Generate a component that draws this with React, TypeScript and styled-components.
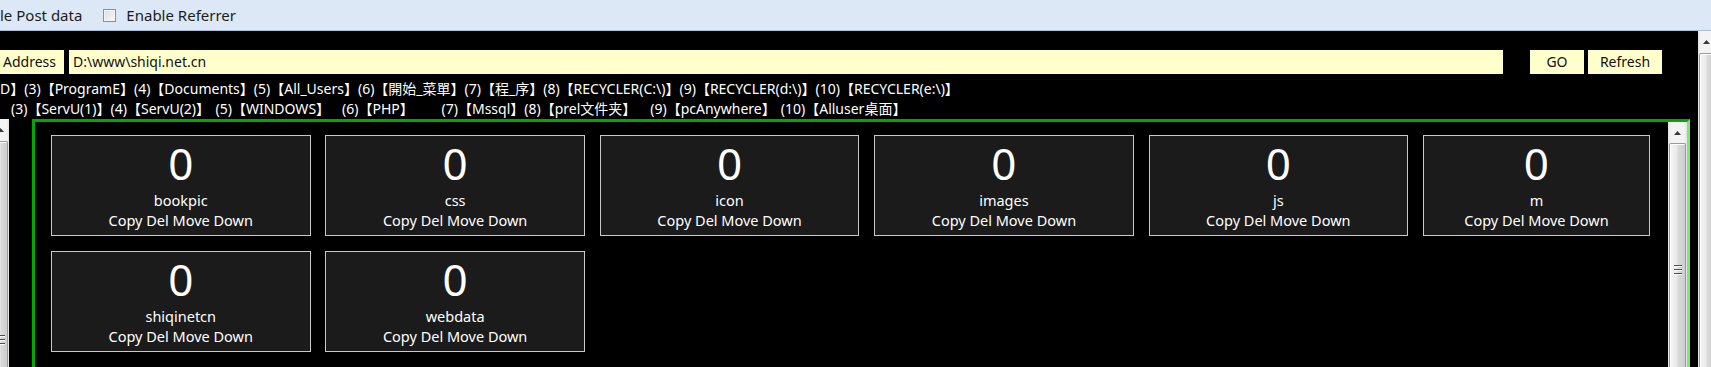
import React from "react";
import styled, { createGlobalStyle } from "styled-components";

const GlobalStyle = createGlobalStyle`
  html, body { margin: 0; padding: 0; background: #000; overflow: hidden; }
  body { font-family: "Noto Sans", "Noto Sans CJK SC", sans-serif; }
`;

const Page = styled.div`
  width: 1711px;
  height: 367px;
  display: flex;
  flex-direction: column;
  overflow: hidden;
  background: #000;
`;

const TopBar = styled.div`
  height: 30px;
  flex: none;
  background: #dce8f6;
  border-bottom: 1px solid #a9bfd8;
  display: flex;
  align-items: center;
  font-size: 15px;
  color: #1c1c1c;
  white-space: nowrap;
`;

const TopLabel = styled.span`
  line-height: 20px;
`;

const CheckBox = styled.span`
  width: 13px;
  height: 13px;
  box-sizing: border-box;
  margin: 0 10px 0 21px;
  border: 1px solid #8e8f8f;
  background: linear-gradient(135deg, #dcdcdc, #fbfbfb);
  box-shadow: inset 0 0 0 1px #f4f4f4;
  flex: none;
`;

const Body = styled.div`
  flex: 1;
  min-height: 0;
  display: flex;
`;

const Main = styled.div`
  flex: 1;
  min-width: 0;
  display: flex;
  flex-direction: column;
  padding-top: 19px;
`;

const AddressRow = styled.div`
  height: 24px;
  flex: none;
  display: flex;
  padding-right: 36px;
  font-size: 14px;
  color: #111;
`;

const YellowBox = styled.div<{ $w?: number; $center?: boolean }>`
  background: #ffffcc;
  height: 24px;
  line-height: 24px;
  box-sizing: border-box;
  white-space: nowrap;
  ${(p) => (p.$w ? `width: ${p.$w}px; flex: none;` : "flex: 1; min-width: 0;")}
  text-align: ${(p) => (p.$center ? "center" : "left")};
  padding-left: ${(p) => (p.$center ? 0 : 3)}px;
`;

const AddressLabel = styled(YellowBox)`
  margin-right: 5px;
`;

const AddressInput = styled(YellowBox)`
  margin-right: 27px;
  padding-left: 4px;
`;

const GoButton = styled(YellowBox)`
  margin-right: 4px;
`;

const Links = styled.div`
  margin-top: 5px;
  flex: none;
  font-size: 14px;
  color: #fff;
`;

const LinkRow = styled.div<{ $indent: number }>`
  display: flex;
  height: 20px;
  line-height: 20px;
  white-space: nowrap;
  padding-left: ${(p) => p.$indent}px;
`;

const LinkItem = styled.span<{ $w?: number }>`
  flex: none;
  ${(p) => (p.$w ? `min-width: ${p.$w}px;` : "")}
`;

const Bottom = styled.div`
  flex: 1;
  min-height: 0;
  display: flex;
  align-items: stretch;
  overflow: hidden;
`;

const Panel = styled.div`
  margin-left: 23px;
  width: 1658px;
  height: 270px;
  flex: none;
  box-sizing: border-box;
  border-style: solid;
  border-width: 3px;
  border-color: #00a800 #7fe37f #7fe37f #00a800;
  display: flex;
`;

const Content = styled.div`
  flex: 1;
  min-width: 0;
  padding: 13px 0 0 16px;
`;

const CardGrid = styled.div`
  display: grid;
  grid-template-columns: repeat(5, 259.5px) 227px;
  grid-auto-rows: 101px;
  column-gap: 14.9px;
  row-gap: 15px;
`;

const Card = styled.div`
  box-sizing: border-box;
  border: 1px solid #c9c9c9;
  background: #1b1b1b;
  color: #fff;
  text-align: center;
  padding-top: 5px;
  font-size: 14.5px;
`;

const Count = styled.div`
  font-size: 44px;
  line-height: 44px;
  margin-bottom: 5px;
`;

const TextLine = styled.div`
  line-height: 20px;
  white-space: nowrap;
`;

/* scrollbars */
const SbClip = styled.div<{ $w: number; $side: "left" | "right" }>`
  width: ${(p) => p.$w}px;
  flex: none;
  overflow: hidden;
  display: flex;
  justify-content: ${(p) => (p.$side === "left" ? "flex-end" : "flex-start")};
`;

const Sb = styled.div<{ $w: number }>`
  width: ${(p) => p.$w}px;
  flex: none;
  display: flex;
  flex-direction: column;
  background: linear-gradient(to right, #e3e3e3, #f3f3f3 15%, #f3f3f3 85%, #e3e3e3);
`;

const SbArrow = styled.div<{ $h: number }>`
  height: ${(p) => p.$h}px;
  flex: none;
  display: flex;
  align-items: center;
  justify-content: center;
`;

const SbThumb = styled.div<{ $grip: number }>`
  flex: 1;
  margin: 0 1px;
  border: 1px solid #9a9a9a;
  border-bottom: none;
  border-radius: 2px 2px 0 0;
  background: linear-gradient(to right, #f6f6f6, #e9e9e9 45%, #dadada 55%, #cdcdcd);
  box-shadow: inset 1px 1px 0 #fdfdfd;
  padding-top: ${(p) => p.$grip}px;
  display: flex;
  flex-direction: column;
  align-items: center;
`;

const GripLine = styled.span`
  width: 8px;
  height: 1px;
  background: #4f4f4f;
  box-shadow: 0 1px 0 #f7f7f7;
  margin-bottom: 3px;
`;

const Arrow = () => (
  <svg width="7" height="4" viewBox="0 0 7 4">
    <path d="M0 4 L3.5 0 L7 4 Z" fill="#3a3a3a" />
  </svg>
);

const ScrollBar: React.FC<{ w: number; arrowH: number; grip?: number }> = ({ w, arrowH, grip }) => (
  <Sb $w={w}>
    <SbArrow $h={arrowH}>
      <Arrow />
    </SbArrow>
    <SbThumb $grip={grip ?? 0}>
      {grip !== undefined && (
        <>
          <GripLine />
          <GripLine />
          <GripLine />
        </>
      )}
    </SbThumb>
  </Sb>
);

const row1: { t: string; w?: number }[] = [
  { t: "D】" },
  { t: "(3)【ProgramE】" },
  { t: "(4)【Documents】" },
  { t: "(5)【All_Users】" },
  { t: "(6)【開始_菜單】" },
  { t: "(7)【程_序】" },
  { t: "(8)【RECYCLER(C:\\)】" },
  { t: "(9)【RECYCLER(d:\\)】" },
  { t: "(10)【RECYCLER(e:\\)】" },
];

const row2: { t: string; w?: number }[] = [
  { t: "(3)【ServU(1)】", w: 99.5 },
  { t: "(4)【ServU(2)】", w: 105 },
  { t: "(5)【WINDOWS】", w: 126.5 },
  { t: "(6)【PHP】", w: 99.5 },
  { t: "(7)【Mssql】", w: 81 },
  { t: "(8)【prel文件夹】", w: 126 },
  { t: "(9)【pcAnywhere】", w: 130.5 },
  { t: "(10)【Alluser桌面】" },
];

const folders = ["bookpic", "css", "icon", "images", "js", "m", "shiqinetcn", "webdata"];

export default function App() {
  return (
    <>
      <GlobalStyle />
      <Page>
        <TopBar>
          <TopLabel>le Post data</TopLabel>
          <CheckBox />
          <TopLabel>Enable Referrer</TopLabel>
        </TopBar>
        <Body>
          <Main>
            <AddressRow>
              <AddressLabel $w={64}>Address</AddressLabel>
              <AddressInput>D:\www\shiqi.net.cn</AddressInput>
              <GoButton $w={54} $center>GO</GoButton>
              <YellowBox $w={74} $center>Refresh</YellowBox>
            </AddressRow>
            <Links>
              <LinkRow $indent={0}>
                {row1.map((l) => (
                  <LinkItem key={l.t} $w={l.w}>{l.t}</LinkItem>
                ))}
              </LinkRow>
              <LinkRow $indent={11}>
                {row2.map((l) => (
                  <LinkItem key={l.t} $w={l.w}>{l.t}</LinkItem>
                ))}
              </LinkRow>
            </Links>
            <Bottom>
              <SbClip $w={9} $side="left">
                <ScrollBar w={17} arrowH={22} grip={193} />
              </SbClip>
              <Panel>
                <Content>
                  <CardGrid>
                    {folders.map((f) => (
                      <Card key={f}>
                        <Count>0</Count>
                        <TextLine>{f}</TextLine>
                        <TextLine>Copy Del Move Down</TextLine>
                      </Card>
                    ))}
                  </CardGrid>
                </Content>
                <ScrollBar w={19} arrowH={21} grip={121} />
              </Panel>
            </Bottom>
          </Main>
          <SbClip $w={13} $side="right">
            <ScrollBar w={17} arrowH={22} />
          </SbClip>
        </Body>
      </Page>
    </>
  );
}
